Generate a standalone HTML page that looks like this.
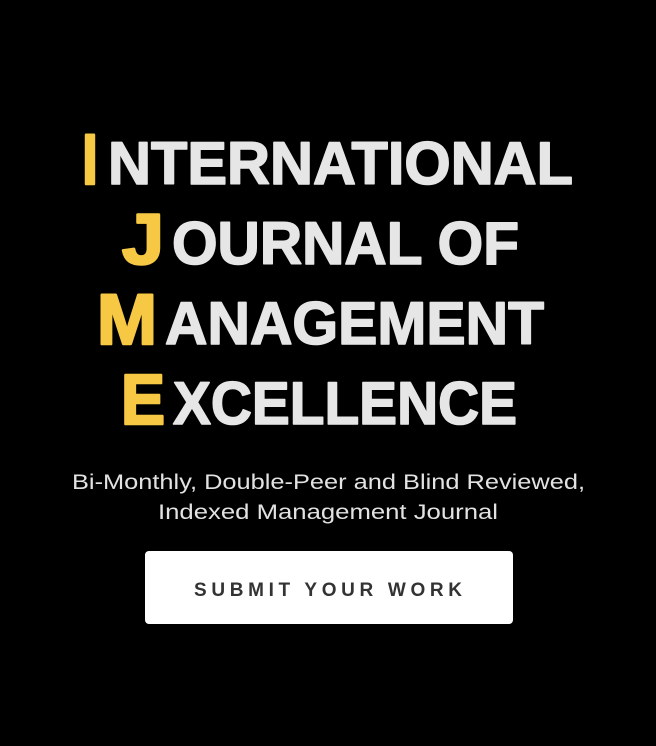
<!DOCTYPE html>
<html><head><meta charset="utf-8">
<style>
html,body{margin:0;padding:0;background:#000;width:656px;height:746px;overflow:hidden}
svg{display:block}
</style></head>
<body>
<svg width="656" height="746" viewBox="0 0 656 746" xmlns="http://www.w3.org/2000/svg">
<rect width="656" height="746" fill="#000"/>
<g font-family="Liberation Sans, sans-serif" font-weight="bold" stroke-linejoin="round">
<g fill="#f6c844" stroke="#f6c844" stroke-width="2.6">
<text x="82" y="184" font-size="71" textLength="16" lengthAdjust="spacingAndGlyphs">I</text>
<text x="122" y="264" font-size="71" textLength="42" lengthAdjust="spacingAndGlyphs">J</text>
<text x="97" y="344" font-size="71" textLength="60" lengthAdjust="spacingAndGlyphs">M</text>
<text x="121" y="424" font-size="71" textLength="44" lengthAdjust="spacingAndGlyphs">E</text>
</g>
<g fill="#e6e6e6" stroke="#e6e6e6" stroke-width="1.6">
<text x="108" y="184" font-size="60" textLength="465" lengthAdjust="spacingAndGlyphs">NTERNATIONAL</text>
<text x="172" y="264" font-size="60" textLength="347" lengthAdjust="spacingAndGlyphs">OURNAL OF</text>
<text x="165" y="344" font-size="60" textLength="379" lengthAdjust="spacingAndGlyphs">ANAGEMENT</text>
<text x="173" y="424" font-size="60" textLength="344" lengthAdjust="spacingAndGlyphs">XCELLENCE</text>
</g>
</g>
<g font-family="Liberation Sans, sans-serif" font-size="21" fill="#e2e2e2">
<text x="72" y="489" textLength="513" lengthAdjust="spacingAndGlyphs">Bi-Monthly, Double-Peer and Blind Reviewed,</text>
<text x="158" y="519" textLength="340" lengthAdjust="spacingAndGlyphs">Indexed Management Journal</text>
</g>
<rect x="145" y="551" width="368" height="73" rx="4" fill="#fff"/>
<text x="194" y="596" font-family="Liberation Sans, sans-serif" font-weight="bold" font-size="19" fill="#333" textLength="268" lengthAdjust="spacing">SUBMIT YOUR WORK</text>
</svg>
</body></html>
